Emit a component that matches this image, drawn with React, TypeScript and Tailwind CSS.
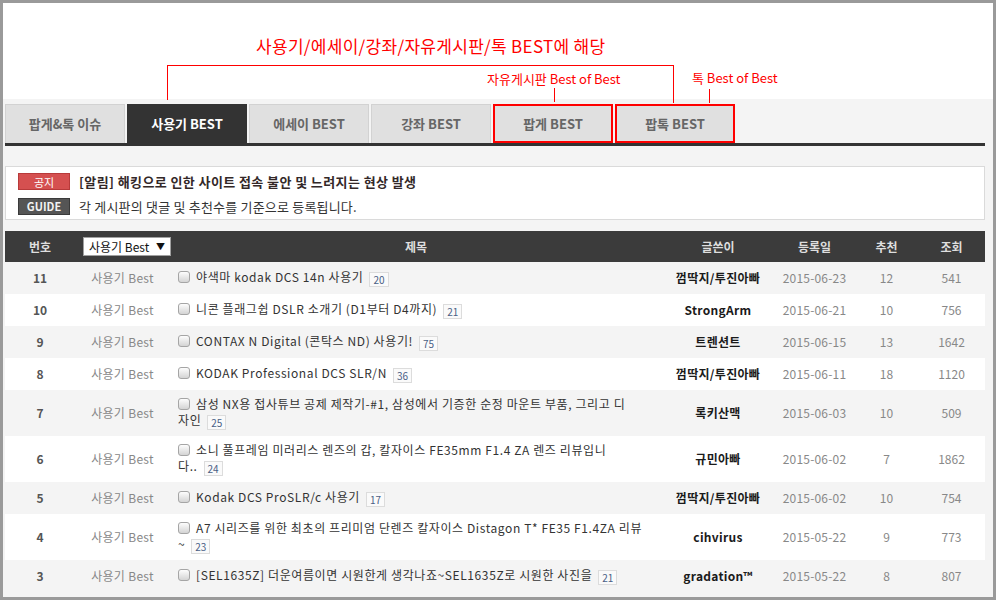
import React from "react"

type Row = {
  no: number
  title: string
  title2?: string
  c: number
  author: string
  date: string
  rec: number
  view: number
}

const rows: Row[] = [
  { no: 11, title: "야색마 kodak DCS 14n 사용기", c: 20, author: "껌딱지/투진아빠", date: "2015-06-23", rec: 12, view: 541 },
  { no: 10, title: "니콘 플래그쉽 DSLR 소개기 (D1부터 D4까지)", c: 21, author: "StrongArm", date: "2015-06-21", rec: 10, view: 756 },
  { no: 9, title: "CONTAX N Digital (콘탁스 ND) 사용기!", c: 75, author: "트렌션트", date: "2015-06-15", rec: 13, view: 1642 },
  { no: 8, title: "KODAK Professional DCS SLR/N", c: 36, author: "껌딱지/투진아빠", date: "2015-06-11", rec: 18, view: 1120 },
  { no: 7, title: "삼성 NX용 접사튜브 공제 제작기-#1, 삼성에서 기증한 순정 마운트 부품, 그리고 디", title2: "자인", c: 25, author: "록키산맥", date: "2015-06-03", rec: 10, view: 509 },
  { no: 6, title: "소니 풀프레임 미러리스 렌즈의 갑, 칼자이스 FE35mm F1.4 ZA 렌즈 리뷰입니", title2: "다..", c: 24, author: "규민아빠", date: "2015-06-02", rec: 7, view: 1862 },
  { no: 5, title: "Kodak DCS ProSLR/c 사용기", c: 17, author: "껌딱지/투진아빠", date: "2015-06-02", rec: 10, view: 754 },
  { no: 4, title: "A7 시리즈를 위한 최초의 프리미엄 단렌즈 칼자이스 Distagon T* FE35 F1.4ZA 리뷰", title2: "~", c: 23, author: "cihvirus", date: "2015-05-22", rec: 9, view: 773 },
  { no: 3, title: "[SEL1635Z] 더운여름이면 시원한게 생각나죠~SEL1635Z로 시원한 사진을", c: 21, author: "gradation™", date: "2015-05-22", rec: 8, view: 807 },
]

const tabs = ["팝게&톡 이슈", "사용기 BEST", "에세이 BEST", "강좌 BEST", "팝게 BEST", "팝톡 BEST"]

function Check() {
  return (
    <span className="inline-block w-[12px] h-[12px] rounded-[3px] border border-[#a5a5a5] bg-gradient-to-b from-[#fdfdfd] to-[#d4d4d4] align-[-1px] mr-[6px]" />
  )
}

function Count({ n }: { n: number }) {
  return (
    <span className="inline-block ml-[6px] px-[3px] h-[15px] leading-[13px] tracking-normal border border-[#dcdcdc] bg-[#fafafa] text-[10px] text-[#4a5f86] align-[-2px]">
      {n}
    </span>
  )
}

export default function App() {
  return (
    <div className="w-[996px] h-[600px] border-[3px] border-[#9a9a9a] bg-white overflow-hidden font-['Noto_Sans_CJK_KR',sans-serif]">
      <div className="relative w-full h-full flex flex-col">
        {/* annotations */}
        <div className="h-[96px] shrink-0 bg-white" />
        <div className="absolute left-[253px] top-[34px] text-[17px] tracking-[0.3px] leading-none text-[#f00] whitespace-nowrap z-10">
          사용기/에세이/강좌/자유게시판/톡 BEST에 해당
        </div>
        <div className="absolute left-[164px] top-[62px] w-[507px] h-px bg-[#f00] z-10" />
        <div className="absolute left-[164px] top-[62px] w-px h-[35px] bg-[#f00] z-10" />
        <div className="absolute left-[670px] top-[62px] w-px h-[38px] bg-[#f00] z-10" />
        <div className="absolute left-[484px] top-[69px] text-[13px] leading-none text-[#f00] whitespace-nowrap z-10">
          자유게시판 Best of Best
        </div>
        <div className="absolute left-[551px] top-[85px] w-px h-[14px] bg-[#f00] z-10" />
        <div className="absolute left-[689px] top-[68px] text-[13px] leading-none text-[#f00] whitespace-nowrap z-10">
          톡 Best of Best
        </div>
        <div className="absolute left-[706px] top-[86px] w-px h-[14px] bg-[#f00] z-10" />

        <div className="flex-1 bg-[#f4f4f4] pl-[2px] pr-[8px] pt-[5px]">
          {/* tabs */}
          <div className="flex gap-[2px] h-[39px]">
            {tabs.map((t, i) => (
              <div
                key={t}
                className={
                  i === 1
                    ? "w-[120px] flex items-center justify-center bg-[#333] text-white text-[13px] font-bold"
                    : i >= 4
                    ? "w-[120px] flex items-center justify-center bg-[#e0e0e0] border-2 border-[#f00] text-[#666] text-[13px] font-bold"
                    : "w-[120px] flex items-center justify-center bg-[#e0e0e0] border border-[#d2d2d2] border-b-0 text-[#666] text-[13px] font-bold"
                }
              >
                {t}
              </div>
            ))}
          </div>
          <div className="h-[3px] bg-[#333]" />

          {/* notice */}
          <div className="mt-[20px] h-[54px] bg-white border border-[#dadada] pl-[12px] pt-[5px] flex flex-col gap-[5px]">
            <div className="flex items-center">
              <span className="w-[52px] h-[17px] flex items-center justify-center bg-[#d55050] border border-[#b83a3a] text-white text-[11px]">공지</span>
              <span className="ml-[9px] text-[13px] tracking-[0.4px] font-bold text-[#332828]">[알림] 해킹으로 인한 사이트 접속 불안 및 느려지는 현상 발생</span>
            </div>
            <div className="flex items-center">
              <span className="w-[52px] h-[17px] flex items-center justify-center bg-[#555] border border-[#3a3a3a] text-[#f2f2f2] text-[11px] font-bold">GUIDE</span>
              <span className="ml-[9px] text-[13px] tracking-[0.2px] text-[#333]">각 게시판의 댓글 및 추천수를 기준으로 등록됩니다.</span>
            </div>
          </div>

          {/* table header */}
          <div className="mt-[11px] h-[31px] bg-[#3b3b3b] flex items-center text-[12px] font-bold text-[#dedede]">
            <div className="w-[70px] text-center">번호</div>
            <div className="w-[95px] pl-[8px]">
              <div className="w-[88px] h-[19px] bg-white border border-[#a0a0a0] flex items-center justify-between px-[5px] font-normal text-[12px] text-[#111]">
                <span>사용기 Best</span>
                <span className="text-[9px]">▼</span>
              </div>
            </div>
            <div className="w-[492px] text-center">제목</div>
            <div className="w-[112px] text-center">글쓴이</div>
            <div className="w-[81px] text-center">등록일</div>
            <div className="w-[63px] text-center">추천</div>
            <div className="w-[67px] text-center">조회</div>
          </div>

          {/* rows */}
          {rows.map((r, i) => (
            <div
              key={r.no}
              className={
                (i % 2 === 0 ? "bg-[#f4f4f4] " : "bg-white ") +
                (r.title2 ? "h-[46px] " : "h-[32px] ") +
                "flex items-center text-[12px]"
              }
            >
              <div className="w-[70px] text-center font-bold text-[#555]">{r.no}</div>
              <div className="w-[95px] text-center tracking-[0.3px] text-[#888]">사용기 Best</div>
              <div className="w-[492px] pl-[8px] text-[#333] tracking-[0.6px] leading-[16px] whitespace-nowrap">
                <Check />
                {r.title}
                {r.title2 ? (
                  <>
                    <br />
                    {r.title2}
                  </>
                ) : null}
                <Count n={r.c} />
              </div>
              <div className="w-[112px] text-center font-bold tracking-[0.3px] text-[#1a1a1a]">{r.author}</div>
              <div className="w-[81px] text-center tracking-[0.2px] text-[#888]">{r.date}</div>
              <div className="w-[63px] text-center text-[#888]">{r.rec}</div>
              <div className="w-[67px] text-center text-[#888]">{r.view}</div>
            </div>
          ))}
        </div>
      </div>
    </div>
  )
}
